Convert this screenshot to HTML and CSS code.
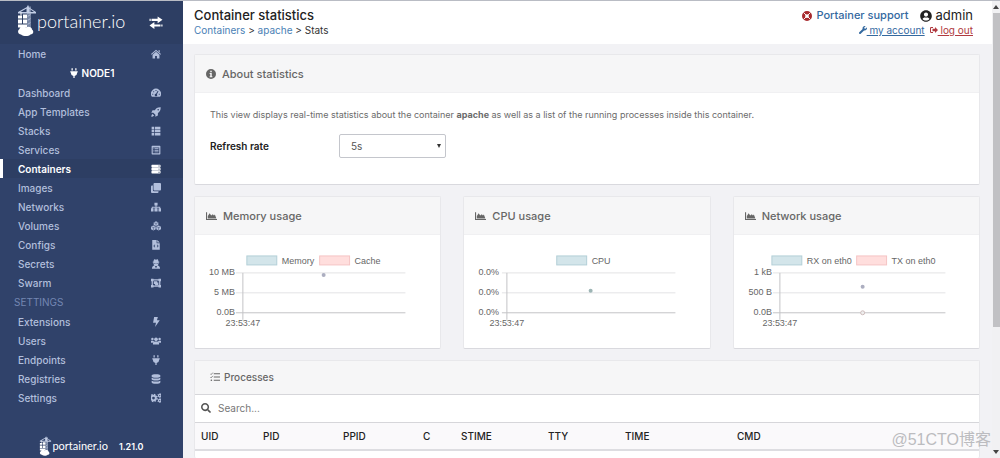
FILE: index.html
```html
<!DOCTYPE html>
<html lang="en">
<head>
<meta charset="utf-8">
<title>Container statistics</title>
<link rel="stylesheet" href="styles.css">
</head>
<body>
<svg class="sprite" aria-hidden="true">
  <symbol id="crane" viewBox="0 0 20 32">
    <path d="M11 1l-1 1.500-9 5v1.500h18V7.500l-7-4.500zM3.500 7.500l6-3.500v3.500zm9 0V4.200l4.500 3.300z" fill="#c3cee6"/>
    <path d="M11 1v29M13 2v27M11 12l2-2M11 16l2-2M11 20l2-2" stroke="#c3cee6" stroke-width="1"/>
    <path d="M4 8v3" stroke="#fff" stroke-width="1"/>
    <path d="M1 11h4v3H1zm5-1h4v4H6zM1 15h4v4H1zm5 0h4v4H6zM1 20h9v3H1z" fill="#fff"/>
    <path d="M4 30c-3 0-4-4-1.500-5.500C3 21.500 7 21 9 23c2-1.500 6-.5 6 2 2.500 2 1 5-1.500 5-2 2-7 2-9.500 0z" fill="#fff"/>
  </symbol>
  <symbol id="exchange" viewBox="0 0 16 16"><path d="M0 3.500h1.500V6H0zM2.500 3.500h7.500V.5l6 4.200-6 4.300V6H2.500zM16 10.500h-1.500V13H16zM13.500 10.500H6v-3l-6 4.300L6 16v-3h7.500z"/></symbol>
  <symbol id="home" viewBox="0 0 16 16"><path d="M8 1l8 7-1 1.200-7-6-7 6L0 8zM12 2h2v3.500l-2-1.800zM8 4.500l5.500 4.700V15H9.500v-4h-3v4h-4V9.200z"/></symbol>
  <symbol id="plug" viewBox="-64 0 512 512"><path d="M320 32a32 32 0 0 0-64 0v96h64zm48 128H16A16 16 0 0 0 0 176v32a16 16 0 0 0 16 16h16v32a160.070 160.070 0 0 0 128 156.800V512h64v-99.200A160.070 160.070 0 0 0 352 256v-32h16a16 16 0 0 0 16-16v-32a16 16 0 0 0-16-16zM128 32a32 32 0 0 0-64 0v96h64z"/></symbol>
  <symbol id="gauge" viewBox="0 0 16 16"><path fill-rule="evenodd" d="M1.500 14A8 8 0 1 1 14.500 14zM7.200 3v1.700h1.600V3zM3.500 5v1.700h1.600V5zM2 9v1.700h1.600V9zM12.400 9v1.700H14V9zM10.800 4.500L8 9.200a2 2 0 1 0 1.500.8L12 5.200z"/></symbol>
  <symbol id="rocket" viewBox="0 0 16 16"><path fill-rule="evenodd" d="M15.500.5C10.500.2 8 2.500 6.200 5H2.500L.5 9h3.200L7 12.300v3.200l4-2V9.800c2.500-1.800 4.800-4.300 4.500-9.300zM11.500 3a1.300 1.300 0 1 1 0 2.600 1.300 1.300 0 0 1 0-2.600zM2.500 11c-1.500 1-2 3-2 4.500 1.500 0 3.500-.5 4.500-2z"/></symbol>
  <symbol id="list" viewBox="0 0 16 16"><path d="M1 1h4.200v4H1zM6.400 1H15v4H6.400zM1 6.100h4.200v3.800H1zM6.400 6.100H15v3.800H6.400zM1 11h4.200v4H1zM6.400 11H15v4H6.400z"/></symbol>
  <symbol id="listalt" viewBox="0 0 16 16"><path fill-rule="evenodd" d="M2 1h12a1 1 0 0 1 1 1v12a1 1 0 0 1-1 1H2a1 1 0 0 1-1-1V2a1 1 0 0 1 1-1zM2.800 4v9h10.400V4zM4 5.200h1.400v1.300H4zM6.200 5.200H12v1.300H6.200zM4 7.700h1.400V9H4zM6.200 7.700H12V9H6.200zM4 10.200h1.400v1.300H4zM6.200 10.200H12v1.300H6.200z"/></symbol>
  <symbol id="server" viewBox="0 0 16 16"><path fill-rule="evenodd" d="M1.500 1h13l.8.800v2.900l-.8.800h-13l-.8-.8V1.800zM1.500 6h13l.8.800v2.700l-.8.800h-13l-.8-.8V6.800zM1.500 10.800h13l.8.800v2.900l-.8.800h-13l-.8-.8v-2.900zM12 2.500V4h1.700V2.500zM12 7.400v1.500h1.700V7.400zM12 12.300v1.500h1.700v-1.500z"/></symbol>
  <symbol id="clone" viewBox="0 0 16 16"><path d="M5.500 0h9A1.500 1.500 0 0 1 16 1.500v9a1.500 1.500 0 0 1-1.500 1.500h-9A1.500 1.500 0 0 1 4 10.500v-9A1.500 1.500 0 0 1 5.500 0zM3 4v7a2 2 0 0 0 2 2h7v1.500a1.500 1.500 0 0 1-1.500 1.500h-9A1.500 1.500 0 0 1 0 14.500v-9A1.500 1.500 0 0 1 1.500 4z"/></symbol>
  <symbol id="sitemap" viewBox="1 0 16 16"><path d="M6.500 1h5v4.500H9.800v2h6V10H18v5h-5v-5h1.300V9H9.800v1h1.700v5h-5v-5h1.700V9H3.700v1H5v5H0v-5h2.200V7.500h6v-2H6.500z"/></symbol>
  <symbol id="cubes" viewBox="0 0 16 16"><path d="M8 .5l3.700 1.700v4L8 8 4.300 6.200v-4zM3.800 7l3.700 1.700v4.600L3.800 15 0 13.300V8.700zM12.200 7L16 8.700v4.600L12.200 15l-3.700-1.700V8.700z"/><path d="M4.800 2.500L8 4l3.200-1.500M8 4v3.500M.5 9l3.300 1.500L7 9M3.800 10.500v4M9 9l3.200 1.500L15.500 9M12.200 10.500v4" fill="none" stroke="#30426a" stroke-width=".8"/></symbol>
  <symbol id="file" viewBox="0 0 16 16"><path fill-rule="evenodd" d="M2 0h7v5h5v10.500H2zM10 0l4 4h-4zM6 7L3.700 9.500 6 12l.8-.8-1.500-1.700 1.500-1.700zM10 7l-.8.8 1.500 1.700-1.500 1.700.8.800 2.300-2.500z"/></symbol>
  <symbol id="secret" viewBox="0 0 16 16"><path fill-rule="evenodd" d="M5.500.5C6.500 0 7 1 8 1s1.500-1 2.500-.5c.8.500 1.200 2 1.500 3.500l2 .8-2 1.200c.3 2-.5 3.500-1.500 4.200 2.500.3 4 2 4 5.300h-13c0-3.300 1.500-5 4-5.300C4.500 9.500 3.700 8 4 6L2 4.800 4 4c.3-1.500.700-3 1.500-3.500zM5 6.300c0 1.500 2.200 1.500 2.500 0zM8.500 6.300c.3 1.500 2.500 1.500 2.500 0zM6.500 11l.8 3h1.400l.8-3z"/></symbol>
  <symbol id="group" viewBox="0 0 16 16"><path fill-rule="evenodd" d="M0 1h4v1h8V1h4v4h-1v6h1v4h-4v-1H4v1H0v-4h1V5H0zM4 5H3v6h1v1h8v-1h1V5h-1V4H4zM4.500 5H10v2h1.800v4.500H6.500v-2h-2z"/></symbol>
  <symbol id="bolt" viewBox="0 0 16 16"><path d="M5 0h6L9.500 5H14L6.500 16 8 9.200H3.300z"/></symbol>
  <symbol id="users" viewBox="1 0 18 16"><circle cx="3.500" cy="4.500" r="2.200"/><circle cx="16.500" cy="4.500" r="2.200"/><circle cx="10" cy="5" r="3.300"/><path d="M0 11V9.500Q0 7.500 2 7.500h3l1.500 1.200Q4 10 4 11zM20 11V9.500q0-2-2-2h-3l-1.500 1.200Q16 10 16 11zM4.500 14.500V12q0-3 3-3h5q3 0 3 3v2.500z"/></symbol>
  <symbol id="database" viewBox="0 0 16 16"><path d="M1 2.500C1-.5 15-.5 15 2.500v1.300c0 2.700-14 2.700-14 0zM1 6c3 1.800 11 1.800 14 0v2.500c0 2.700-14 2.700-14 0zM1 10.800c3 1.800 11 1.800 14 0v2.500c0 3.200-14 3.200-14 0z"/></symbol>
  <symbol id="cogs" viewBox="2 0 16 16"><g fill="none" stroke="currentColor"><circle cx="6" cy="8" r="3.700" stroke-width="3"/><circle cx="6" cy="8" r="5.600" stroke-width="2.200" stroke-dasharray="2.400 2"/><circle cx="16" cy="4" r="2" stroke-width="2"/><circle cx="16" cy="4" r="3.200" stroke-width="1.400" stroke-dasharray="1.600 1.750"/><circle cx="16" cy="12" r="2" stroke-width="2"/><circle cx="16" cy="12" r="3.200" stroke-width="1.400" stroke-dasharray="1.600 1.750"/></g></symbol>
  <symbol id="info" viewBox="0 0 16 16"><path fill-rule="evenodd" d="M8 0a8 8 0 1 1 0 16A8 8 0 0 1 8 0zM6.800 2.800v2.400h2.400V2.800zM5.800 6.500V8h1v3.500h-1V13h4.400v-1.500h-1v-5z"/></symbol>
  <symbol id="area" viewBox="0 0 18 16"><path d="M0 2h1.800v11H18v1.700H0zM3 12V8l3-4.500L8.500 7 11 5l2 2 1.500-1.500L17 12z"/></symbol>
  <symbol id="tasks" viewBox="0 0 16 16"><path d="M6 2h10v1.600H6zM6 7.200h10v1.600H6zM6 12.400h10V14H6z"/><path d="M.5 2.800l1.300 1.300L4.500 1M.5 8l1.300 1.300 2.700-3.100" fill="none" stroke="currentColor" stroke-width="1.200"/><circle cx="2.200" cy="13.200" r="1.300"/></symbol>
  <symbol id="search" viewBox="0 0 512 512"><path d="M505 442.700L405.300 343c-4.500-4.500-10.600-7-17-7H372c27.600-35.300 44-79.700 44-128C416 93.100 322.900 0 208 0S0 93.100 0 208s93.100 208 208 208c48.300 0 92.700-16.400 128-44v16.300c0 6.400 2.500 12.500 7 17l99.700 99.700c9.400 9.400 24.600 9.400 33.900 0l28.300-28.300c9.400-9.400 9.400-24.600.1-34zM208 336c-70.700 0-128-57.200-128-128 0-70.700 57.200-128 128-128 70.700 0 128 57.200 128 128 0 70.700-57.200 128-128 128z"/></symbol>
  <symbol id="user" viewBox="0 0 496 512"><path d="M248 8C111 8 0 119 0 256s111 248 248 248 248-111 248-248S385 8 248 8zm0 96c48.600 0 88 39.400 88 88s-39.400 88-88 88-88-39.400-88-88 39.400-88 88-88zm0 344c-58.700 0-111.300-26.600-146.500-68.200 18.800-35.400 55.600-59.800 98.500-59.800 2.400 0 4.800.4 7.100 1.100 13 4.200 26.600 6.900 40.900 6.900 14.300 0 28-2.700 40.900-6.900 2.300-.7 4.700-1.100 7.100-1.100 42.900 0 79.700 24.400 98.500 59.800C359.300 421.400 306.700 448 248 448z"/></symbol>
  <symbol id="wrench" viewBox="0 0 512 512"><path d="M507.730 109.100c-2.240-9.030-13.540-12.090-20.120-5.510l-74.360 74.360-67.880-11.310-11.310-67.880 74.360-74.360c6.620-6.620 3.430-17.900-5.660-20.160-47.380-11.740-99.550.91-136.580 37.930-39.640 39.640-50.550 97.100-34.050 147.200L18.740 402.760c-24.990 24.990-24.990 65.510 0 90.500 24.990 24.990 65.510 24.990 90.500 0l213.210-213.210c50.120 16.710 107.470 5.680 147.370-34.220 37.070-37.070 49.700-89.320 37.910-136.730z"/></symbol>
  <symbol id="signout" viewBox="0 0 16 16"><path d="M6 2v2H3a1 1 0 0 0-1 1v6a1 1 0 0 0 1 1h3v2H2.500A2.500 2.500 0 0 1 0 11.500v-7A2.500 2.500 0 0 1 2.500 2zM10 2l6 6-6 6v-3.700H5V5.700h5z"/></symbol>
  <symbol id="ring" viewBox="0 0 16 16"><circle cx="8" cy="8" r="5.500" fill="none" stroke="currentColor" stroke-width="5"/><path d="M2.500 2.500l4 4M13.500 2.500l-4 4M2.500 13.500l4-4M13.500 13.500l-4-4" stroke="#fff" stroke-width="1.500"/></symbol>
</svg>

<div class="app">
  <aside class="sidebar">
    <div class="brand">
      <a class="logo" href="#"><svg class="crane"><use href="#crane"/></svg><span>portainer.io</span></a>
      <button class="toggle" type="button" aria-label="Toggle sidebar"><svg class="icon"><use href="#exchange"/></svg></button>
    </div>
    <nav class="menu">
      <a class="item" href="#">Home<svg class="icon"><use href="#home"/></svg></a>
      <div class="node"><svg class="icon"><use href="#plug"/></svg>NODE1</div>
      <a class="item" href="#">Dashboard<svg class="icon"><use href="#gauge"/></svg></a>
      <a class="item" href="#">App Templates<svg class="icon"><use href="#rocket"/></svg></a>
      <a class="item" href="#">Stacks<svg class="icon"><use href="#list"/></svg></a>
      <a class="item" href="#">Services<svg class="icon"><use href="#listalt"/></svg></a>
      <a class="item active" href="#" aria-current="page">Containers<svg class="icon"><use href="#server"/></svg></a>
      <a class="item" href="#">Images<svg class="icon"><use href="#clone"/></svg></a>
      <a class="item" href="#">Networks<svg class="icon"><use href="#sitemap"/></svg></a>
      <a class="item" href="#">Volumes<svg class="icon"><use href="#cubes"/></svg></a>
      <a class="item" href="#">Configs<svg class="icon"><use href="#file"/></svg></a>
      <a class="item" href="#">Secrets<svg class="icon"><use href="#secret"/></svg></a>
      <a class="item" href="#">Swarm<svg class="icon"><use href="#group"/></svg></a>
      <div class="section">SETTINGS</div>
      <a class="item" href="#">Extensions<svg class="icon"><use href="#bolt"/></svg></a>
      <a class="item" href="#">Users<svg class="icon"><use href="#users"/></svg></a>
      <a class="item" href="#">Endpoints<svg class="icon"><use href="#plug"/></svg></a>
      <a class="item" href="#">Registries<svg class="icon"><use href="#database"/></svg></a>
      <a class="item" href="#">Settings<svg class="icon"><use href="#cogs"/></svg></a>
    </nav>
    <footer class="version"><span class="logo small"><svg class="crane"><use href="#crane"/></svg><span>portainer.io</span></span><b>1.21.0</b></footer>
  </aside>

  <main class="main">
    <header class="top">
      <div class="heading">
        <h1>Container statistics</h1>
        <div class="crumbs"><a href="#">Containers</a> &gt; <a href="#">apache</a> &gt; Stats</div>
      </div>
      <div class="account">
        <div class="who">
          <a class="support" href="#"><svg class="icon red"><use href="#ring"/></svg>Portainer support</a>
          <span class="admin"><svg class="icon"><use href="#user"/></svg>admin</span>
        </div>
        <div class="links">
          <a href="#"><svg class="icon"><use href="#wrench"/></svg> my account</a>
          <a class="logout" href="#"><svg class="icon"><use href="#signout"/></svg> log out</a>
        </div>
      </div>
    </header>

    <div class="content">
      <section class="card">
        <h2><svg class="icon"><use href="#info"/></svg>About statistics</h2>
        <div class="about">
          <p>This view displays real-time statistics about the container <b>apache</b> as well as a list of the running processes inside this container.</p>
          <div class="field">
            <label for="rate">Refresh rate</label>
            <div class="pick"><select id="rate"><option>5s</option><option>10s</option><option>30s</option></select></div>
          </div>
        </div>
      </section>

      <div class="charts">
        <section class="card">
          <h2><svg class="icon wide"><use href="#area"/></svg>Memory usage</h2>
          <svg class="chart" viewBox="0 1 246 113">
            <rect class="blue" x="52" y="22" width="30" height="9"/><text x="87" y="30">Memory</text>
            <rect class="pink" x="125" y="22" width="30" height="9"/><text x="160" y="30">Cache</text>
            <path class="grid" d="M41 39H211M41 59H211"/><path class="axis" d="M41 79H211M48 39V86"/>
            <g class="ticks"><text x="40" y="41">10 MB</text><text x="40" y="61">5 MB</text><text x="40" y="81">0.0B</text></g>
            <text class="time" x="48" y="92">23:53:47</text>
            <circle class="dot" cx="129" cy="41" r="2"/>
          </svg>
        </section>
        <section class="card">
          <h2><svg class="icon wide"><use href="#area"/></svg>CPU usage</h2>
          <svg class="chart" viewBox="0 1 246 113">
            <rect class="blue" x="93" y="22" width="30" height="9"/><text x="128" y="30">CPU</text>
            <path class="grid" d="M38 39H212M38 59H212"/><path class="axis" d="M38 79H212M43 39V86"/>
            <g class="ticks"><text x="35" y="41">0.0%</text><text x="35" y="61">0.0%</text><text x="35" y="81">0.0%</text></g>
            <text class="time" x="43" y="92">23:53:47</text>
            <circle class="dot teal" cx="127" cy="57" r="2"/>
          </svg>
        </section>
        <section class="card">
          <h2><svg class="icon wide"><use href="#area"/></svg>Network usage</h2>
          <svg class="chart" viewBox="0 1 246 113">
            <rect class="blue" x="38" y="22" width="30" height="9"/><text x="73" y="30">RX on eth0</text>
            <rect class="pink" x="123" y="22" width="30" height="9"/><text x="158" y="30">TX on eth0</text>
            <path class="grid" d="M39 39H212M39 59H212"/><path class="axis" d="M39 79H212M46 39V86"/>
            <g class="ticks"><text x="38" y="41">1 kB</text><text x="38" y="61">500 B</text><text x="38" y="81">0.0B</text></g>
            <text class="time" x="46" y="92">23:53:47</text>
            <circle class="dot" cx="129" cy="53" r="2"/><circle class="ring" cx="129" cy="79" r="2"/>
          </svg>
        </section>
      </div>

      <section class="card processes">
        <h2><svg class="icon"><use href="#tasks"/></svg>Processes</h2>
        <label class="search"><svg class="icon"><use href="#search"/></svg><input type="text" placeholder="Search..." aria-label="Search processes"></label>
        <table>
          <colgroup><col class="c-uid"><col class="c-pid"><col class="c-pid"><col class="c-c"><col class="c-stime"><col class="c-tty"><col class="c-time"><col></colgroup>
          <thead><tr><th>UID</th><th>PID</th><th>PPID</th><th>C</th><th>STIME</th><th>TTY</th><th>TIME</th><th>CMD</th></tr></thead>
        </table>
      </section>
    </div>
  </main>

  <div class="scrollbar" aria-hidden="true"><span class="up"></span><span class="thumb"></span><span class="down"></span></div>
</div>
<div class="watermark">@51CTO博客</div>
</body>
</html>
```
FILE: styles.css
```css
* { box-sizing: border-box; }
body { margin: 0; font-family: Inter, "Open Sans", sans-serif; font-size: 10px; color: #333; }
.sprite { position: absolute; width: 0; height: 0; }
.icon { width: 10px; height: 10px; fill: currentColor; flex: none; overflow: visible; }
a { color: #4a7fb5; text-decoration: none; }
.app { display: flex; height: 100vh; overflow: hidden; border-top: 1px solid #b9bcc4; background: #f2f2f5; }

.sidebar { width: 183px; flex: none; display: flex; flex-direction: column; background: #30426a; }
.brand { display: flex; align-items: center; justify-content: space-between; height: 43px; padding: 0 20px 4px 17px; background: #2d3e63; }
.logo { display: flex; align-items: center; color: #fff; font-family: Lato, sans-serif; font-size: 18px; line-height: 32px; font-weight: 300; }
.logo .crane { width: 20px; height: 33px; }
.logo.small { font-size: 11px; line-height: 20px; font-weight: 400; }
.logo.small .crane { width: 13px; height: 20px; }
.toggle { display: flex; padding: 4px 0 0; border: 0; background: none; color: #fff; }
.toggle .icon { width: 14px; height: 13px; }
.menu { display: flex; flex-direction: column; }
.item { display: flex; align-items: center; justify-content: space-between; height: 19px; padding: 0 22px 0 15px; border-left: 3px solid transparent; color: #b2bfdc; font-weight: 500; }
.item.active { border-left-color: #fff; background: #2d3e63; color: #fff; font-weight: 600; }
.node { display: flex; align-items: center; justify-content: center; gap: 3px; height: 20px; color: #fff; font-weight: 600; }
.section { height: 20px; padding-left: 14px; line-height: 20px; color: #7487b2; }
.version { display: flex; align-items: center; justify-content: center; gap: 11px; margin-top: auto; padding-bottom: 2px; color: #fff; }
.version b { font-size: 9px; font-weight: 600; }

.main { flex: 1; min-width: 0; display: flex; flex-direction: column; }
.top { flex: none; display: flex; justify-content: space-between; height: 43px; padding: 6px 19px 0 11px; background: #fff; }
h1 { margin: 0; font-size: 13px; line-height: 17px; font-weight: 500; color: #222; }
.crumbs { font-size: 10px; line-height: 13px; }
.account { display: flex; flex-direction: column; align-items: flex-end; }
.who { display: flex; align-items: center; gap: 11px; line-height: 17px; }
.support, .admin { display: flex; align-items: center; gap: 4px; }
.support { font-size: 11px; font-weight: 500; color: #34699f; }
.red { color: #a82a2e; }
.admin { font-size: 13px; color: #222; }
.admin .icon { width: 12px; height: 12px; }
.links { display: flex; gap: 5px; line-height: 13px; }
.links a { text-decoration: underline; color: #34699f; }
.links .icon { width: 8px; height: 8px; }
.links .logout { color: #b03a40; }

.content { flex: 1; display: flex; flex-direction: column; gap: 11px; padding: 10px 12px 0 11px; }
.card { border: 1px solid #e8e8eb; border-bottom-color: #d9d9de; border-radius: 2px; background: #fff; }
.card h2 { display: flex; align-items: center; gap: 6px; height: 38px; margin: 0; padding: 0 11px; background: #f6f6f7; border-bottom: 1px solid #f0f0f2; font-size: 11px; font-weight: 500; color: #666; }
.card h2 .wide { width: 11px; }
.about { padding: 16px 15px 26px; }
.about p { margin: 0; font-size: 9px; line-height: 12px; color: #6b6b6b; }
.field { display: flex; align-items: center; margin-top: 13px; }
.field label { width: 129px; font-weight: 600; color: #222; }
.pick { position: relative; width: 107px; }
.pick::after { content: ""; position: absolute; right: 5px; top: 10px; border: 2px solid transparent; border-top: 4px solid #333; border-bottom: 0; }
select { width: 100%; height: 24px; padding: 0 11px; border: 1px solid #c4c6cc; border-radius: 2px; appearance: none; background: #fff; color: #555; font: inherit; }

.charts { display: grid; grid-template-columns: repeat(3, 1fr); gap: 22px; }
.chart { display: block; width: 100%; font-family: "Liberation Sans", Arial, sans-serif; font-size: 9px; fill: #666; }
.blue { fill: #d3e5ea; stroke: #b3cfd7; }
.pink { fill: #ffdedd; stroke: #f5c4c4; }
.grid { stroke: #e3e3e5; fill: none; }
.axis { stroke: #c3c3c6; fill: none; }
.ticks { text-anchor: end; }
.time { text-anchor: middle; }
.dot { fill: #acaec0; }
.teal { fill: #9db5b5; }
.ring { fill: #eee; stroke: #cdbcbc; }

.processes { flex: 1; display: flex; flex-direction: column; border-bottom: 0; }
.processes h2 { height: 34px; padding: 0 15px; gap: 4px; border-bottom-color: #d6d6da; font-size: 10px; }
.search { display: flex; align-items: center; gap: 7px; height: 27px; padding: 0 6px; color: #555; }
.search input { flex: 1; padding: 0; border: 0; outline: 0; background: none; font: inherit; font-size: 10px; }
.search input::placeholder { color: #777; opacity: 1; }
table { width: 100%; table-layout: fixed; border-collapse: collapse; }
th { height: 28px; padding: 0 6px; text-align: left; font-size: 10px; font-weight: 500; color: #222; background: #faf9fb; border-top: 1px solid #d6d6da; border-bottom: 2px solid #dddde1; }
.c-uid { width: 62px; }
.c-pid { width: 80px; }
.c-c { width: 38px; }
.c-stime { width: 87px; }
.c-tty { width: 77px; }
.c-time { width: 112px; }

.scrollbar { display: flex; flex-direction: column; align-items: center; width: 8px; flex: none; padding: 4px 0; background: #f1f1f3; }
.up { border: 3px solid transparent; border-bottom: 4px solid #444; border-top: 0; }
.thumb { width: 7px; height: 70%; margin-top: 4px; background: #c1c1c4; }
.down { margin-top: auto; border: 3px solid transparent; border-top: 4px solid #444; border-bottom: 0; }
.watermark { position: absolute; right: 9px; bottom: 7px; font-family: "Liberation Sans", "Noto Sans CJK SC", sans-serif; font-size: 16px; line-height: 22px; color: #bcbcc0; }
```
